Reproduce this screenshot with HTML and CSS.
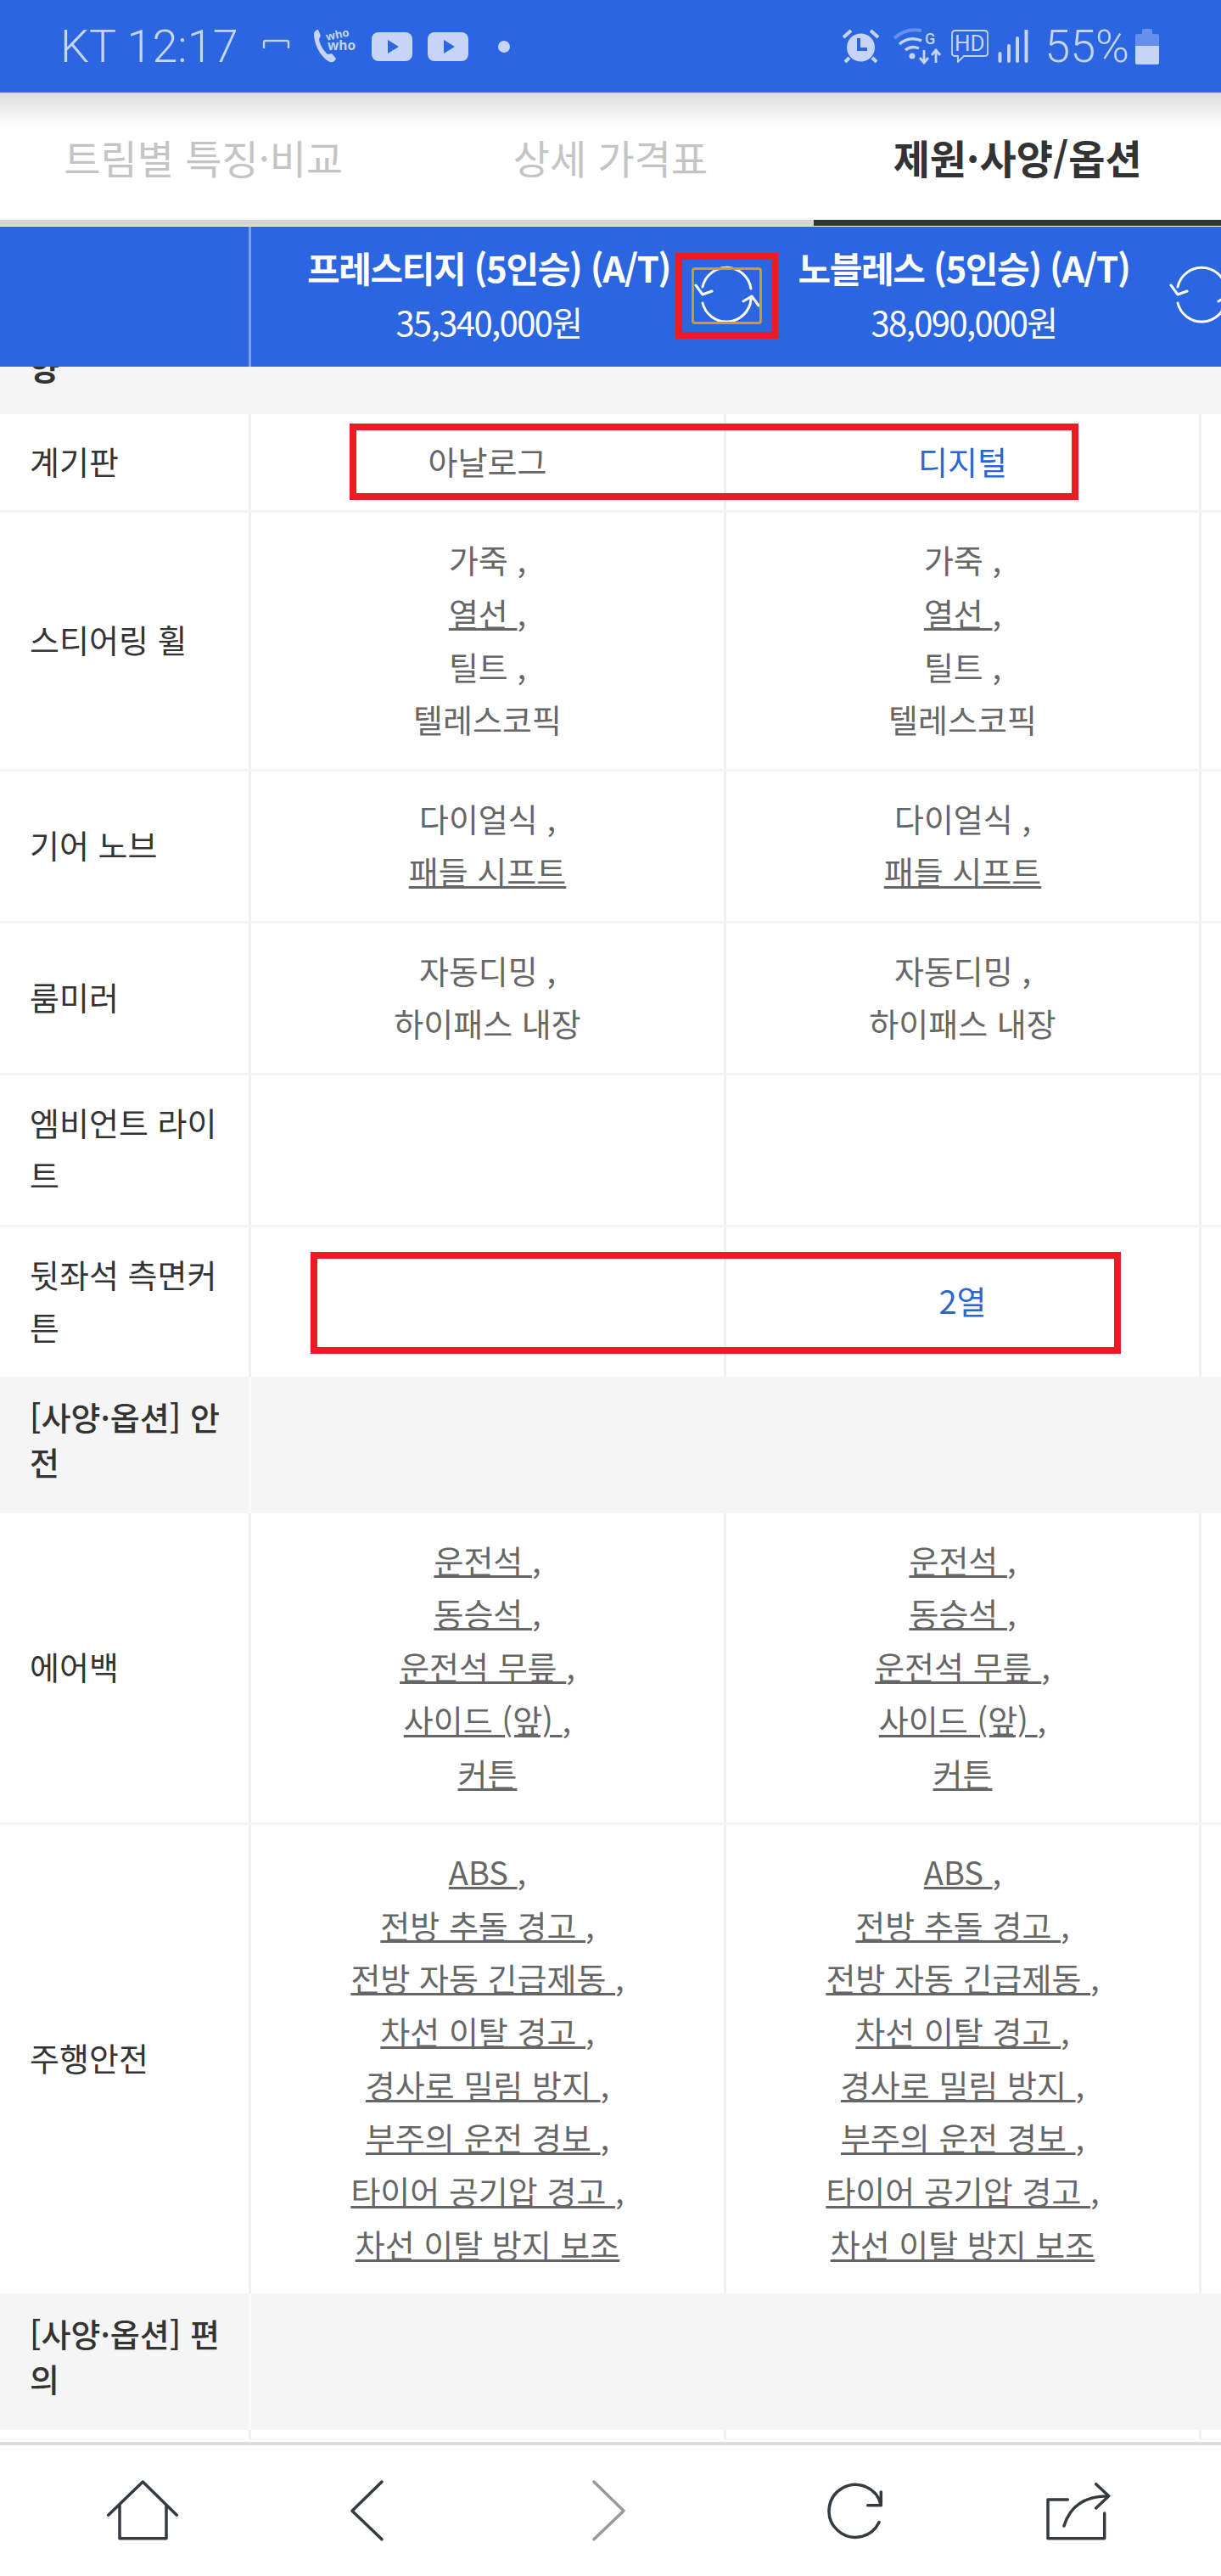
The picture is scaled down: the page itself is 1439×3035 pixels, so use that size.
FILE: index.html
```html
<!DOCTYPE html>
<html lang="ko">

<head>
    <meta charset="UTF-8">
    <meta name="viewport" content="width=device-width, initial-scale=1.0">
    <title>제원·사양/옵션</title>
    <link rel="stylesheet" href="styles.css">
</head>

<body>
    <div class="page">
        <div class="status">
            <div class="status-left">
                <span class="clock">KT 12:17</span>
                <svg class="ic-cast" width="33" height="12" viewBox="0 0 33 12"><path d="M2 11V4q0-2 2-2h25q2 0 2 2v7" fill="none" stroke="#c5d4f7" stroke-width="2.4"/></svg>
                <svg class="ic-who" width="52" height="44" viewBox="0 0 52 44">
                    <path d="M2 7c0-3 3-5 5-5l3 7-2 4c1 7 5 13 10 18l5-1 5 6c-1 3-4 5-7 4C10 35 2 19 2 7z" fill="#c5d4f7"/>
                    <text class="who-top" x="17" y="15" transform="rotate(-12 17 15)">who</text>
                    <text class="who-text" x="18" y="26">who</text>
                </svg>
                <svg class="ic-yt" width="48" height="34" viewBox="0 0 48 34"><rect width="48" height="34" rx="8" fill="#c5d4f7"/><path d="M19 9l13 8-13 8z" fill="#2b65e0"/></svg>
                <svg class="ic-yt" width="48" height="34" viewBox="0 0 48 34"><rect width="48" height="34" rx="8" fill="#c5d4f7"/><path d="M19 9l13 8-13 8z" fill="#2b65e0"/></svg>
                <span class="dot"></span>
            </div>
            <div class="status-right">
                <svg width="45" height="41" viewBox="0 0 45 41">
                    <path d="M2 10l9-8M43 10l-9-8M9 34l-5 5M36 34l5 5" stroke="#c5d4f7" stroke-width="4" fill="none"/>
                    <circle cx="22.500" cy="22" r="16.500" fill="#c5d4f7"/>
                    <path d="M20 11v13h10" stroke="#2b65e0" stroke-width="4" fill="none"/>
                </svg>
                <svg class="ic-wifi" width="57" height="43" viewBox="0 0 57 43">
                    <path d="M1 12C11 3 22 1 33 3" stroke="#648fec" stroke-width="4" fill="none"/>
                    <path d="M7 19c8-7 18-8 26-4M14 26c5-4 11-4 16-2" stroke="#c5d4f7" stroke-width="3.500" fill="none"/>
                    <circle cx="22" cy="33" r="3.500" fill="#c5d4f7"/>
                    <text class="g-text" x="37" y="19">G</text>
                    <path d="M36 26v14M31 35l5 6 5-6M50 41V27M45 32l5-6 5 6" stroke="#c5d4f7" stroke-width="2.800" fill="none"/>
                </svg>
                <svg class="ic-hd" width="44" height="39" viewBox="0 0 44 39">
                    <path d="M5 1h34q4 0 4 4v23q0 3-4 3H15l-7 7v-7H5q-4 0-4-3V5q0-4 4-4z" fill="none" stroke="#c5d4f7" stroke-width="1.800"/>
                    <text class="hd-text" x="4" y="25">HD</text>
                </svg>
                <svg class="ic-sig" width="36" height="39" viewBox="0 0 36 39">
                    <path d="M2.500 28v9M13 19v18M23 10v27M33.500 1v36" stroke="#c5d4f7" stroke-width="4" stroke-linecap="round" fill="none"/>
                </svg>
                <span class="batt-pct">55%</span>
                <svg class="ic-batt" width="28" height="42" viewBox="0 0 28 42">
                    <path d="M8 2q0-2 2-2h8q2 0 2 2v4h6q2 0 2 2v12H0V8q0-2 2-2h6z" fill="#648fec"/>
                    <path d="M0 20h28v20q0 2-2 2H2q-2 0-2-2z" fill="#c5d4f7"/>
                </svg>
            </div>
        </div>

        <div class="tabs">
            <a class="tab">트림별 특징·비교</a>
            <a class="tab">상세 가격표</a>
            <a class="tab on">제원·사양/옵션</a>
        </div>

        <div class="trim-head">
            <div class="head-blank"></div>
            <div class="head-cell">
                <strong>프레스티지 (5인승) (A/T)</strong>
                <span>35,340,000원</span>
                <svg class="swap" viewBox="0 0 80 80"><use href="#swap-arrows"/></svg>
                <div class="mark-gold"></div>
                <div class="mark-red"></div>
            </div>
            <div class="head-cell">
                <strong>노블레스 (5인승) (A/T)</strong>
                <span>38,090,000원</span>
                <svg class="swap" viewBox="0 0 80 80"><use href="#swap-arrows"/></svg>
            </div>
        </div>

        <div class="spec">
            <div class="cut-row">
                <div class="cut-text">양</div>
            </div>

            <div class="row">
                <div class="label">계기판</div>
                <div class="val">아날로그</div>
                <div class="val blue">디지털</div>
                <div class="tail"></div>
                <div class="box box-meter"></div>
            </div>

            <div class="row">
                <div class="label">스티어링 휠</div>
                <div class="val">
                    <div>가죽 ,</div>
                    <div><u>열선 </u>,</div>
                    <div>틸트 ,</div>
                    <div>텔레스코픽</div>
                </div>
                <div class="val">
                    <div>가죽 ,</div>
                    <div><u>열선 </u>,</div>
                    <div>틸트 ,</div>
                    <div>텔레스코픽</div>
                </div>
                <div class="tail"></div>
            </div>

            <div class="row">
                <div class="label">기어 노브</div>
                <div class="val">
                    <div>다이얼식 ,</div>
                    <div><u>패들 시프트</u></div>
                </div>
                <div class="val">
                    <div>다이얼식 ,</div>
                    <div><u>패들 시프트</u></div>
                </div>
                <div class="tail"></div>
            </div>

            <div class="row">
                <div class="label">룸미러</div>
                <div class="val">
                    <div>자동디밍 ,</div>
                    <div>하이패스 내장</div>
                </div>
                <div class="val">
                    <div>자동디밍 ,</div>
                    <div>하이패스 내장</div>
                </div>
                <div class="tail"></div>
            </div>

            <div class="row">
                <div class="label">엠비언트 라이트</div>
                <div class="val"></div>
                <div class="val"></div>
                <div class="tail"></div>
            </div>

            <div class="row last">
                <div class="label">뒷좌석 측면커튼</div>
                <div class="val"></div>
                <div class="val blue">2열</div>
                <div class="tail"></div>
                <div class="box box-curtain"></div>
            </div>

            <div class="row section">
                <div class="label">[사양·옵션] 안전</div>
            </div>

            <div class="row">
                <div class="label">에어백</div>
                <div class="val">
                    <div><u>운전석 </u>,</div>
                    <div><u>동승석 </u>,</div>
                    <div><u>운전석 무릎 </u>,</div>
                    <div><u>사이드 (앞) </u>,</div>
                    <div><u>커튼</u></div>
                </div>
                <div class="val">
                    <div><u>운전석 </u>,</div>
                    <div><u>동승석 </u>,</div>
                    <div><u>운전석 무릎 </u>,</div>
                    <div><u>사이드 (앞) </u>,</div>
                    <div><u>커튼</u></div>
                </div>
                <div class="tail"></div>
            </div>

            <div class="row last">
                <div class="label">주행안전</div>
                <div class="val">
                    <div><u>ABS </u>,</div>
                    <div><u>전방 추돌 경고 </u>,</div>
                    <div><u>전방 자동 긴급제동 </u>,</div>
                    <div><u>차선 이탈 경고 </u>,</div>
                    <div><u>경사로 밀림 방지 </u>,</div>
                    <div><u>부주의 운전 경보 </u>,</div>
                    <div><u>타이어 공기압 경고 </u>,</div>
                    <div><u>차선 이탈 방지 보조</u></div>
                </div>
                <div class="val">
                    <div><u>ABS </u>,</div>
                    <div><u>전방 추돌 경고 </u>,</div>
                    <div><u>전방 자동 긴급제동 </u>,</div>
                    <div><u>차선 이탈 경고 </u>,</div>
                    <div><u>경사로 밀림 방지 </u>,</div>
                    <div><u>부주의 운전 경보 </u>,</div>
                    <div><u>타이어 공기압 경고 </u>,</div>
                    <div><u>차선 이탈 방지 보조</u></div>
                </div>
                <div class="tail"></div>
            </div>

            <div class="row section">
                <div class="label">[사양·옵션] 편의</div>
            </div>

            <div class="row stub">
                <div class="label"></div>
                <div class="val"></div>
                <div class="val"></div>
                <div class="tail"></div>
            </div>
        </div>

        <nav class="bottom-nav">
            <svg class="nav-home" width="96" height="80" viewBox="0 0 96 80">
                <path d="M7.700 45.300L48.300 6l40 39.300M21 33.700v39h55v-39"/>
            </svg>
            <svg class="nav-back" width="60" height="80" viewBox="0 0 60 80">
                <path d="M45 6L10 40.300l35 33.400"/>
            </svg>
            <svg class="nav-next" width="60" height="80" viewBox="0 0 60 80">
                <path d="M10 6l35 34.300-35 33.400"/>
            </svg>
            <svg class="nav-reload" width="90" height="80" viewBox="0 0 90 80">
                <path d="M71 53.700A31 31 0 1 1 73.300 33.700M57.700 33.700h15.600V18"/>
            </svg>
            <svg class="nav-share" width="90" height="80" viewBox="0 0 90 80">
                <path d="M33.300 27H10v45.700h66.700V43M29 58C35 38 50 22.700 81.700 22.700M66.700 8.700l15 14-15 14.300"/>
            </svg>
        </nav>
    </div>

    <svg class="defs" width="0" height="0">
        <symbol id="swap-arrows" viewBox="0 0 80 80">
            <path d="M12 30A29 29 0 0 1 69 32M4 28l8 11 11-4M12 49A29 29 0 0 0 69 45M60 47l10-6 8 11" fill="none" stroke="#fff" stroke-width="3" stroke-linecap="round" stroke-linejoin="round"/>
        </symbol>
    </svg>
</body>

</html>
```

FILE: styles.css
```css
* {
    box-sizing: border-box;
}

body {
    margin: 0;
    background: #fff;
    font-family: "Noto Sans CJK KR", "Noto Sans", sans-serif;
    color: #333;
}

.page {
    width: 1439px;
    height: 3035px;
    display: flex;
    flex-direction: column;
    overflow: hidden;
}

.defs {
    position: absolute;
}

/* status bar */
.status {
    height: 109px;
    flex: none;
    background: #2b65e0;
    padding: 0 73px 0 71px;
    display: flex;
    justify-content: space-between;
    align-items: center;
    color: #c5d4f7;
    font-family: Roboto, sans-serif;
    font-weight: 300;
}

.status-left,
.status-right {
    display: flex;
    align-items: center;
}

.clock {
    font-size: 54px;
    line-height: 60px;
}

.ic-cast {
    margin: 0 0 5px 28px;
}

.ic-who {
    margin: 0 0 0 26px;
    overflow: visible;
}

.who-text,
.who-top {
    font-family: "Open Sans", sans-serif;
    font-size: 15.500px;
    font-weight: 700;
    fill: #c5d4f7;
}

.who-top {
    font-size: 13px;
}

.ic-yt {
    margin-left: 18px;
}

.dot {
    width: 14px;
    height: 14px;
    border-radius: 50%;
    background: #c5d4f7;
    margin-left: 35px;
}

.ic-wifi {
    margin-left: 16px;
}

.g-text {
    font-family: Roboto, sans-serif;
    font-size: 18px;
    font-weight: 500;
    fill: #c5d4f7;
}

.ic-hd {
    margin-left: 11px;
}

.hd-text {
    font-family: Roboto, sans-serif;
    font-size: 26px;
    font-weight: 400;
    fill: #c5d4f7;
}

.ic-sig {
    margin-left: 11px;
}

.batt-pct {
    font-size: 54px;
    line-height: 60px;
    margin-left: 19px;
}

.ic-batt {
    margin-left: 7px;
}

/* tabs */
.tabs {
    height: 158px;
    flex: none;
    display: flex;
    background: linear-gradient(#dcdcdc, #f6f6f6 30px, #fff 42px);
    border-bottom: 1px solid #fff;
}

.tab {
    flex: 1;
    display: flex;
    align-items: center;
    justify-content: center;
    border-bottom: 7px solid #d5d5d5;
    font-size: 47px;
    color: #c4c4c4;
}

.tab.on {
    border-bottom-color: #333;
    color: #333;
    font-weight: 700;
}

/* trim header */
.trim-head {
    height: 165px;
    flex: none;
    background: #2b65e0;
    display: grid;
    grid-template-columns: 296px 560px 560px;
    color: #fff;
}

.head-blank {
    border-right: 3px solid #7d9fe9;
}

.head-cell {
    position: relative;
    display: flex;
    flex-direction: column;
    align-items: center;
    justify-content: center;
    padding-bottom: 6px;
    text-align: center;
}

.head-cell strong {
    font-size: 42px;
    line-height: 65px;
    letter-spacing: -1.400px;
    white-space: nowrap;
}

.head-cell span {
    font-size: 40px;
    line-height: 65px;
    letter-spacing: -1.600px;
}

.swap {
    position: absolute;
    top: 41px;
    right: -40px;
    width: 80px;
    height: 80px;
}

.mark-gold {
    position: absolute;
    left: 519px;
    top: 48px;
    width: 83px;
    height: 67px;
    border: 3px solid #d4992a;
    border-radius: 4px;
}

.mark-red {
    position: absolute;
    left: 500px;
    top: 31px;
    width: 121px;
    height: 101px;
    border: 8px solid #ed1c24;
}

/* spec table */
.spec {
    flex: 1;
    overflow: hidden;
}

.cut-row {
    height: 56px;
    overflow: hidden;
    background: #f5f5f5;
    padding-left: 35px;
    font-size: 38px;
    font-weight: 700;
    line-height: 62.7px;
}

.cut-text {
    margin-top: -31px;
}

.row {
    position: relative;
    display: grid;
    grid-template-columns: 296px 560px 560px 23px;
    border-bottom: 3px solid #f5f5f5;
    font-size: 38px;
    line-height: 62.7px;
}

.row.last {
    border-bottom: 0;
}

.row.section {
    background: #f5f5f5;
    border-bottom: 0;
    font-weight: 500;
    line-height: 53px;
}

.row.stub {
    height: 11px;
    border-bottom: 0;
}

.label {
    display: flex;
    align-items: center;
    padding: 24px 10px 26.600px 35px;
    border-right: 3px solid #f0f0f0;
}

.section .label {
    padding-top: 20px;
    padding-bottom: 35px;
    grid-column: 1;
    border-right-color: #fafafa;
}

.stub .label,
.stub .val {
    padding: 0;
}

.val {
    display: flex;
    flex-direction: column;
    justify-content: center;
    padding: 24px 0 26.600px;
    border-right: 3px solid #f0f0f0;
    text-align: center;
    color: #666;
    white-space: pre-wrap;
}

.val.blue {
    color: #2b65d4;
}

.box {
    position: absolute;
    border: 8px solid #ed1c24;
}

.box-meter {
    left: 412px;
    top: 11px;
    width: 859px;
    height: 90px;
}

.box-curtain {
    left: 366px;
    top: 29px;
    width: 955px;
    height: 120px;
}

/* bottom nav */
.bottom-nav {
    height: 158px;
    flex: none;
    background: #fff;
    border-top: 4px solid #dcdcdc;
    display: flex;
    align-items: center;
    padding-left: 120px;
}

.bottom-nav svg {
    flex: none;
}

.bottom-nav path {
    fill: none;
    stroke: #353a40;
    stroke-width: 3.500;
    stroke-linecap: round;
    stroke-linejoin: round;
}

.bottom-nav .nav-next path {
    stroke: #999;
}

.nav-back {
    margin-left: 189px;
}

.nav-next {
    margin-left: 225px;
}

.nav-reload {
    margin-left: 215px;
}

.nav-share {
    margin-left: 170px;
}
```
